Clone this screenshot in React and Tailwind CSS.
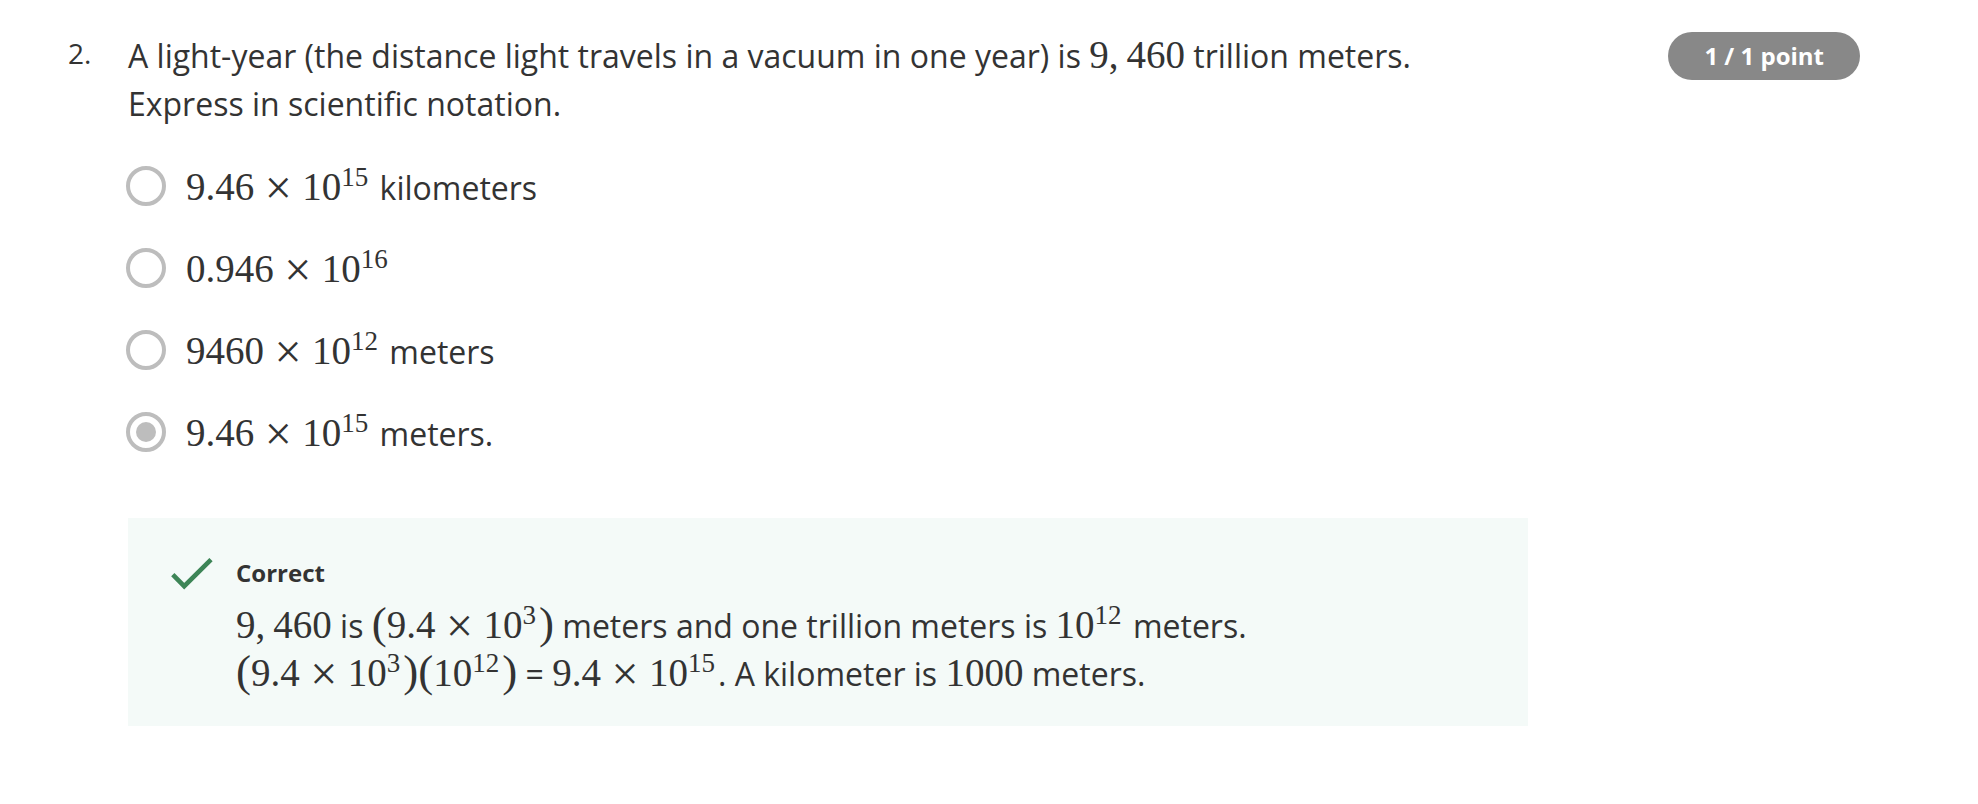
import { useState } from "react";

function Num({ children }) {
  return (
    <span className="font-['Liberation_Serif',serif] text-[39px] leading-0">{children}</span>
  );
}

function Grouped({ head, tail }) {
  return (
    <span className="whitespace-nowrap">
      <Num>
        {head}
        <span className="mr-2">,</span>
        {tail}
      </Num>
    </span>
  );
}

function Power({ exp }) {
  return (
    <Num>
      10
      <span className="mr-[3px] align-[14px] text-[27px] leading-0">{exp}</span>
    </Num>
  );
}

function Times() {
  return (
    <span className="mx-2 inline-block w-8 text-center align-[-4px] font-['Liberation_Serif',serif] text-[48px] leading-0">
      ×
    </span>
  );
}

function Product({ factor, exp }) {
  return (
    <span className="whitespace-nowrap">
      <Num>{factor}</Num>
      <Times />
      <Power exp={exp} />
    </span>
  );
}

function Paren({ children }) {
  return (
    <span className="whitespace-nowrap">
      <span className="font-['Liberation_Serif',serif] text-[45px] leading-0">(</span>
      {children}
      <span className="font-['Liberation_Serif',serif] text-[45px] leading-0">)</span>
    </span>
  );
}

const options = [
  { factor: "9.46", exp: "15", unit: "kilometers" },
  { factor: "0.946", exp: "16", unit: "" },
  { factor: "9460", exp: "12", unit: "meters" },
  { factor: "9.46", exp: "15", unit: "meters." },
];

export default function App() {
  const [selected, setSelected] = useState(3);

  return (
    <main className="flex items-start bg-white pt-8 pr-[118px] pl-[68px] font-['Open_Sans',sans-serif] text-[32px] leading-[48px] text-[#333]">
      <div className="w-[60px] shrink-0 text-[28px] leading-[42px]">2.</div>

      <div className="max-w-[1400px] min-w-0 flex-1">
        <p>
          A light-year (the distance light travels in a vacuum in one year) is{" "}
          <Grouped head="9" tail="460" /> trillion meters.
          <br />
          Express in scientific notation.
        </p>

        <div role="radiogroup" className="mt-9 flex flex-col gap-[34px]">
          {options.map((o, i) => (
            <label key={i} className="-ml-0.5 flex items-start gap-5">
              <input
                type="radio"
                name="answer"
                checked={selected === i}
                onChange={() => setSelected(i)}
                className="mt-0.5 size-10 shrink-0 appearance-none rounded-full border-4 border-[#bdbdbd] bg-clip-content p-1.5 checked:bg-[#bdbdbd]"
              />
              <span>
                <Product factor={o.factor} exp={o.exp} /> {o.unit}
              </span>
            </label>
          ))}
        </div>

        <section className="mt-[60px] flex items-start bg-[#f4faf8] pt-9 pr-9 pb-7 pl-[43px]">
          <svg viewBox="0 0 42 32" className="mt-1 mr-[23px] h-8 w-[42px] shrink-0" aria-hidden="true">
            <path d="M1.8 16.6 L13.2 28.2 L40 1.6" fill="none" stroke="#3d8557" strokeWidth="4.6" />
          </svg>
          <div>
            <h2 className="text-2xl leading-[38px] font-bold">Correct</h2>
            <p className="mt-2.5">
              <Grouped head="9" tail="460" /> is{" "}
              <Paren>
                <Product factor="9.4" exp="3" />
              </Paren>{" "}
              meters and one trillion meters is <Power exp="12" /> meters.
              <br />
              <Paren>
                <Product factor="9.4" exp="3" />
              </Paren>
              <Paren>
                <Power exp="12" />
              </Paren>{" "}
              = <Product factor="9.4" exp="15" />. A kilometer is <Num>1000</Num> meters.
            </p>
          </div>
        </section>
      </div>

      <div className="ml-auto shrink-0 rounded-full bg-[#888] px-9 text-2xl leading-[48px] font-bold text-white">
        1 / 1 point
      </div>
    </main>
  );
}
